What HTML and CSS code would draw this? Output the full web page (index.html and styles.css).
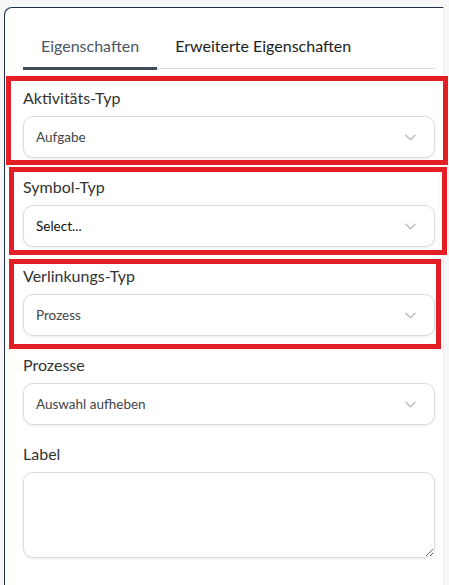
FILE: index.html
```html
<!DOCTYPE html>
<html lang="de">
<head>
<meta charset="utf-8">
<title>Eigenschaften</title>
<link rel="stylesheet" href="styles.css">
</head>
<body>
<div class="panel">
  <div class="tabs">
    <div class="tab active">Eigenschaften</div>
    <div class="tab">Erweiterte Eigenschaften</div>
  </div>
  <div class="field">
    <div class="label">Aktivitäts-Typ</div>
    <div class="select"><span class="value">Aufgabe</span><svg class="chev" viewBox="0 0 12 7" width="11" height="7"><path d="M1 1l5 5 5-5" fill="none" stroke="currentColor" stroke-width="1.6" stroke-linecap="round" stroke-linejoin="round"/></svg></div>
  </div>
  <div class="field">
    <div class="label">Symbol-Typ</div>
    <div class="select"><span class="value placeholder">Select...</span><svg class="chev" viewBox="0 0 12 7" width="11" height="7"><path d="M1 1l5 5 5-5" fill="none" stroke="currentColor" stroke-width="1.6" stroke-linecap="round" stroke-linejoin="round"/></svg></div>
  </div>
  <div class="field">
    <div class="label">Verlinkungs-Typ</div>
    <div class="select"><span class="value">Prozess</span><svg class="chev" viewBox="0 0 12 7" width="11" height="7"><path d="M1 1l5 5 5-5" fill="none" stroke="currentColor" stroke-width="1.6" stroke-linecap="round" stroke-linejoin="round"/></svg></div>
  </div>
  <div class="field">
    <div class="label">Prozesse</div>
    <div class="select"><span class="value">Auswahl aufheben</span><svg class="chev" viewBox="0 0 12 7" width="11" height="7"><path d="M1 1l5 5 5-5" fill="none" stroke="currentColor" stroke-width="1.6" stroke-linecap="round" stroke-linejoin="round"/></svg></div>
  </div>
  <div class="field">
    <div class="label">Label</div>
    <textarea class="textarea"></textarea>
  </div>
</div>
<div class="mark mark-1"></div>
<div class="mark mark-2"></div>
<div class="mark mark-3"></div>
</body>
</html>
```
FILE: styles.css
```css
html, body {
  margin: 0;
  padding: 0;
}
body {
  position: relative;
  background: #f7f7f7;
  font-family: Lato, "Open Sans", sans-serif;
  color: #333;
  width: 449px;
  height: 585px;
  overflow: hidden;
}
.panel {
  margin: 7px 0 0 4px;
  width: 440px;
  height: 600px;
  background: #fff;
  border-top: 1px solid #1d2f4b;
  border-left: 1px solid #1d2f4b;
  border-right: 1px solid #ececec;
  border-top-left-radius: 8px;
  padding: 18px 8px 0 18px;
  box-sizing: border-box;
}
.tabs {
  display: flex;
  border-bottom: 1px solid #dedede;
  margin-bottom: 19px;
  width: 412px;
}
.tab {
  padding: 10px 18px 11px;
  font-size: 16px;
  line-height: 20px;
  color: #222;
  border-bottom: 3px solid transparent;
  margin-bottom: -2px;
}
.tab.active {
  color: #4b5563;
  border-bottom-color: #3e4c5b;
}
.field {
  display: flex;
  flex-direction: column;
  gap: 8px;
  margin-bottom: 19px;
  width: 412px;
}
.label {
  font-size: 16px;
  line-height: 20px;
  color: #333;
}
.select {
  height: 42px;
  box-sizing: border-box;
  border: 1px solid #dcdcdc;
  border-radius: 10px;
  box-shadow: 0 1px 3px rgba(0,0,0,0.08);
  display: flex;
  align-items: center;
  justify-content: space-between;
  padding: 0 18px 0 12px;
  background: #fff;
}
.value {
  font-size: 13.5px;
  color: #444;
}
.value.placeholder {
  color: #111;
}
.chev {
  color: #bdbdbd;
}
.textarea {
  display: block;
  width: 412px;
  height: 86px;
  box-sizing: border-box;
  border: 1px solid #dcdcdc;
  border-radius: 10px;
  box-shadow: 0 1px 3px rgba(0,0,0,0.08);
  resize: vertical;
  font-family: inherit;
  margin: 0;
  padding: 8px 12px;
  outline: none;
}
.mark {
  position: absolute;
  border: 5px solid #e31e24;
  box-sizing: border-box;
}
.mark-1 { left: 6px; top: 76px; width: 442px; height: 89px; }
.mark-2 { left: 9px; top: 167px; width: 438px; height: 88px; }
.mark-3 { left: 9px; top: 259px; width: 432px; height: 90px; }
```
